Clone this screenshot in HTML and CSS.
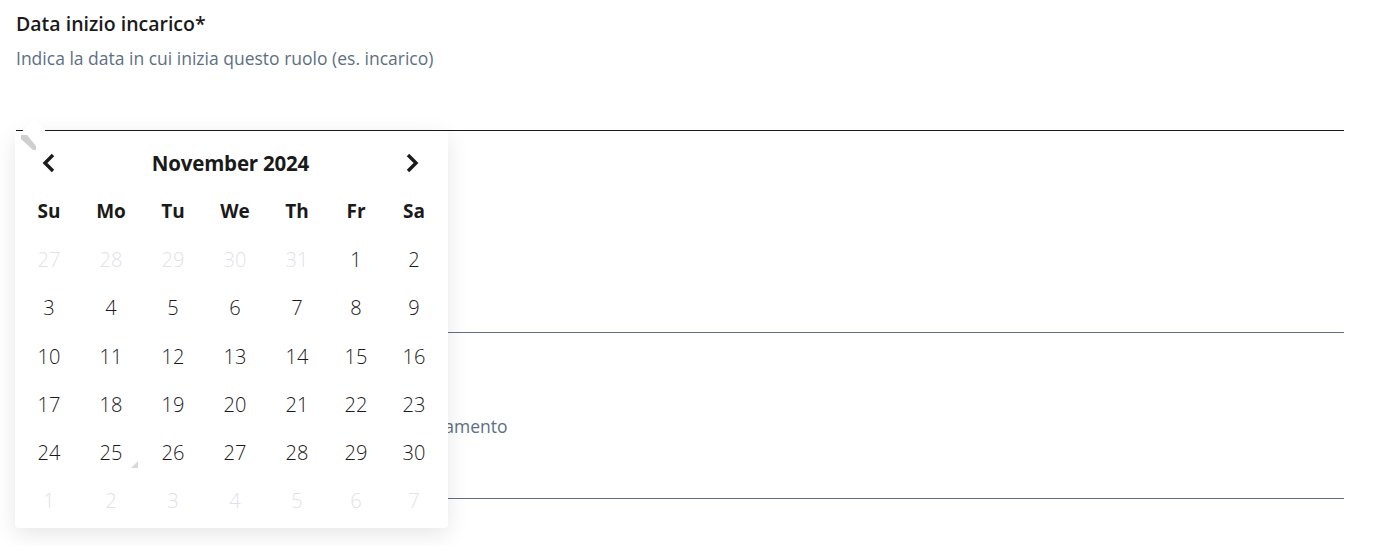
FILE: index.html
```html
<!DOCTYPE html>
<html>
<head>
  <title>Data inizio incarico</title>
  <link rel="stylesheet" href="styles.css">
</head>
<body>

<form class="form">
  <!-- Data inizio -->
  <div class="field field-first">
    <label class="field-label" for="startDate">Data inizio incarico*</label>
    <div class="field-hint">Indica la data in cui inizia questo ruolo (es. incarico)</div>
    <div class="field-input active" id="startDate"></div>

    <!-- Datepicker popup -->
    <div class="picker">
      <div class="picker-arrow"></div>
      <svg class="picker-fold" width="16" height="16" viewBox="0 0 16 16">
        <polygon points="0,0 6,0 15,11 15,15 12,15 0,4" fill="#cfcfcf"/>
      </svg>
      <div class="picker-head">
        <button type="button" class="nav prev">
          <svg width="18" height="20" viewBox="0 0 18 20"><polyline points="13,2 5,10 13,18" fill="none" stroke="#1b1b1b" stroke-width="3.4" stroke-linejoin="miter"/></svg>
        </button>
        <div class="month">November 2024</div>
        <button type="button" class="nav next">
          <svg width="18" height="20" viewBox="0 0 18 20"><polyline points="5,2 13,10 5,18" fill="none" stroke="#1b1b1b" stroke-width="3.4" stroke-linejoin="miter"/></svg>
        </button>
      </div>
      <div class="grid">
        <div class="wd">Su</div><div class="wd">Mo</div><div class="wd">Tu</div><div class="wd">We</div><div class="wd">Th</div><div class="wd">Fr</div><div class="wd">Sa</div>

        <div class="day muted">27</div><div class="day muted">28</div><div class="day muted">29</div><div class="day muted">30</div><div class="day muted">31</div><div class="day">1</div><div class="day">2</div>
        <div class="day">3</div><div class="day">4</div><div class="day">5</div><div class="day">6</div><div class="day">7</div><div class="day">8</div><div class="day">9</div>
        <div class="day">10</div><div class="day">11</div><div class="day">12</div><div class="day">13</div><div class="day">14</div><div class="day">15</div><div class="day">16</div>
        <div class="day">17</div><div class="day">18</div><div class="day">19</div><div class="day">20</div><div class="day">21</div><div class="day">22</div><div class="day">23</div>
        <div class="day">24</div><div class="day today">25</div><div class="day">26</div><div class="day">27</div><div class="day">28</div><div class="day">29</div><div class="day">30</div>
        <div class="day muted">1</div><div class="day muted">2</div><div class="day muted">3</div><div class="day muted">4</div><div class="day muted">5</div><div class="day muted">6</div><div class="day muted">7</div>
      </div>
    </div>
  </div>

  <!-- Data fine -->
  <div class="field">
    <label class="field-label">Data fine</label>
    <div class="field-hint">Indica la data</div>
    <div class="field-input"></div>
  </div>

  <!-- Motivo -->
  <div class="field">
    <label class="field-label">Motivo</label>
    <div class="field-hint">Indica la causa della cessazione incarico o di pensionamento</div>
    <div class="field-input"></div>
  </div>
</form>

</body>
</html>
```

FILE: styles.css
```css
body {
  margin: 0;
  font-family: "Open Sans", "Lato", sans-serif;
  color: #1a1a1a;
  background: #fff;
}

.form {
  padding: 12px 30px 0 16px;
}

.field {
  position: relative;
  margin-bottom: 47px;
}

.field-first {
  margin-bottom: 83px;
}

.field-label {
  display: block;
  font-size: 19.5px;
  line-height: 24px;
  font-weight: 600;
}

.field-hint {
  margin-top: 10px;
  font-size: 17.5px;
  line-height: 24px;
  font-weight: 400;
  color: #5d7083;
}

.field-input {
  height: 60px;
  border-bottom: 1px solid #5d7083;
}

.field-input.active {
  border-bottom-color: #1a1a1a;
}

/* Datepicker */
.picker {
  position: absolute;
  left: -1px;
  top: 119px;
  width: 433px;
  height: 397px;
  background: #fff;
  border-radius: 4px;
  box-shadow: 0 6px 22px rgba(0, 0, 0, 0.1);
  z-index: 2;
}

.picker-arrow {
  position: absolute;
  left: 10px;
  top: -8px;
  width: 18px;
  height: 18px;
  background: #fff;
  transform: rotate(45deg);
  border-radius: 3px;
}

.picker-fold {
  position: absolute;
  left: 6px;
  top: 4px;
}

.picker-head {
  display: flex;
  align-items: center;
  justify-content: space-between;
  height: 40px;
  padding: 12px 27px 0 25px;
}

.nav {
  border: 0;
  background: none;
  padding: 0;
  width: 18px;
  height: 20px;
  cursor: pointer;
}

.month {
  font-size: 20.5px;
  font-weight: 700;
  color: #1a1a1a;
  letter-spacing: -0.2px;
}

.grid {
  display: grid;
  grid-template-columns: 62px 62px 62px 62px 62px 56px 60px;
  grid-auto-rows: 48.3px;
  padding-left: 3px;
  margin-top: 4px;
}

.wd,
.day {
  display: flex;
  align-items: center;
  justify-content: center;
  font-size: 20px;
}

.wd {
  font-size: 19px;
  font-weight: 700;
}

.day {
  font-weight: 300;
  color: #1a1a1a;
}

.day.muted {
  color: #dfe3e8;
}

.day.today {
  position: relative;
}

.day.today::after {
  content: "";
  position: absolute;
  right: 4px;
  bottom: 9px;
  border-style: solid;
  border-width: 0 0 7px 7px;
  border-color: transparent transparent #d9d9d9 transparent;
}
```
